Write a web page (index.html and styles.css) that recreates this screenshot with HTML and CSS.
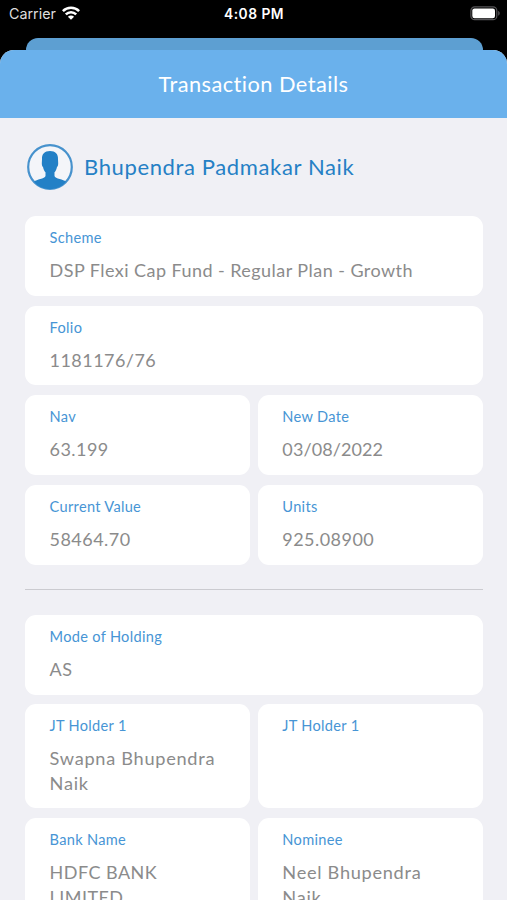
FILE: index.html
```html
<!DOCTYPE html>
<html lang="en">
<head>
<meta charset="utf-8">
<title>Transaction Details</title>
<link rel="stylesheet" href="styles.css">
</head>
<body>
<div class="phone">
  <div class="status">
    <div class="carrier"><span>Carrier</span>
      <svg class="wifi" width="18" height="14" viewBox="0 0 18 14"><g fill="none" stroke="#fff" stroke-width="2.5"><path d="M.9 5.1C5.3.6 12.700.6 17.100 5.100"/><path d="M3.800 8.300c3-2.900 7.400-2.900 10.400 0"/></g><path fill="#fff" d="M9 13.800 5.900 10.700c1.700-1.600 4.500-1.600 6.200 0z"/></svg>
    </div>
    <div class="time">4:08 PM</div>
    <svg class="battery" width="31" height="15" viewBox="0 0 31 15"><rect x=".9" y=".9" width="25.900" height="12.800" rx="3.800" fill="none" stroke="#555457" stroke-width="1.200"/><rect x="2.300" y="2.400" width="22.700" height="9.800" rx="2.200" fill="#fff"/><path d="M28.200 5c2 .7 2 4 0 4.700z" fill="#555457"/></svg>
  </div>
  <div class="behind"></div>
  <main class="sheet">
    <header class="bar"><h1>Transaction Details</h1></header>
    <div class="body">
      <div class="person">
        <svg width="48" height="48" viewBox="0 0 48 48"><circle cx="24" cy="24" r="21.800" fill="#f4f5f9" stroke="#4792cd" stroke-width="2.200"/><path fill="#2380c6" d="M24 8c5.400 0 8.300 3 8 8.200l.2 4c0 2-.5 3.200-1.200 3.800-.5 2.600-1.500 4.300-2.500 5.300v3.700c.4 1.500 2.500 2.300 5.200 3.100 2.500.7 4.700 1.500 6.300 2.600C35.700 43.700 30.200 46 24 46S12.300 43.700 8 38.700c1.600-1.100 3.800-1.900 6.300-2.600 2.700-.8 4.800-1.600 5.200-3.100v-3.700c-1-1-2-2.700-2.500-5.300-.7-.6-1.200-1.800-1.200-3.800l.2-4C15.700 11 18.600 8 24 8z"/></svg>
        <h2>Bhupendra Padmakar Naik</h2>
      </div>
      <section class="grid">
        <div class="card wide"><label>Scheme</label><p>DSP Flexi Cap Fund - Regular Plan - Growth</p></div>
        <div class="card wide"><label>Folio</label><p>1181176/76</p></div>
        <div class="card"><label>Nav</label><p>63.199</p></div>
        <div class="card"><label>New Date</label><p class="date">03/08/2022</p></div>
        <div class="card"><label>Current Value</label><p>58464.70</p></div>
        <div class="card"><label>Units</label><p>925.08900</p></div>
      </section>
      <hr>
      <section class="grid">
        <div class="card wide"><label>Mode of Holding</label><p>AS</p></div>
        <div class="card"><label>JT Holder 1</label><p class="name">Swapna Bhupendra Naik</p></div>
        <div class="card"><label>JT Holder 1</label><p></p></div>
        <div class="card"><label>Bank Name</label><p>HDFC BANK<br>LIMITED</p></div>
        <div class="card"><label>Nominee</label><p class="name">Neel Bhupendra<br>Naik</p></div>
      </section>
    </div>
  </main>
</div>
</body>
</html>
```
FILE: styles.css
```css
* { box-sizing: border-box; }
body { margin: 0; background: #000; font-family: Lato, "Liberation Sans", sans-serif; }
h1, h2, p { margin: 0; font-weight: 400; }
svg { display: block; flex: none; }
.phone { height: 900px; overflow: hidden; display: flex; flex-direction: column; }
.status {
  height: 38px; flex: none; padding: 0 6px 10px 9px;
  display: grid; grid-template-columns: 1fr auto 1fr; align-items: center;
  color: #fff; font-family: Inter, sans-serif; font-size: 14.3px;
}
.carrier { display: flex; align-items: center; gap: 6px; color: #dedede; }
.carrier span { margin-top: -1px; }
.wifi { margin-top: -2px; }
.time { font-weight: 600; font-size: 13.800px; letter-spacing: .5px; padding-right: 2px; }
.battery { justify-self: end; margin-top: -2px; }
.behind { height: 24px; flex: none; margin: 0 24.500px 0 25.500px; border-radius: 12px 12px 0 0; background: #5d9fd2; }
.sheet { flex: none; height: 850px; margin-top: -12px; border-radius: 14px 14px 0 0; background: #f0f0f5; overflow: hidden; }
.bar { height: 68px; padding-bottom: 2px; display: flex; align-items: center; justify-content: center; background: #6ab1ec; color: #fff; }
h1 { font-size: 21.800px; letter-spacing: .45px; }
.body { padding: 24.500px 24.500px 0 25px; }
.person { display: flex; align-items: center; gap: 10px; height: 48px; padding-left: 1px; color: #2580c5; }
h2 { font-size: 22px; letter-spacing: .63px; }
.grid { display: grid; grid-template-columns: 1fr 1fr; gap: 9.800px 8px; margin-top: 25.500px; }
.card { min-height: 79.800px; padding: 12px 24px 12px 24.600px; border-radius: 11px; background: #fff; }
.wide { grid-column: 1 / -1; }
label { display: block; font-size: 14.600px; line-height: 20px; letter-spacing: .3px; color: #4795d5; }
p { margin-top: 10px; font-size: 18px; line-height: 25px; letter-spacing: .45px; color: #8b8b8b; }
.name { font-size: 18.200px; letter-spacing: .7px; margin-right: -4px; }
.date { letter-spacing: .1px; }
hr { height: 1px; margin: 24.500px 0 0; border: 0; background: #cbcbd0; }
hr + .grid { margin-top: 24.800px; }
```
